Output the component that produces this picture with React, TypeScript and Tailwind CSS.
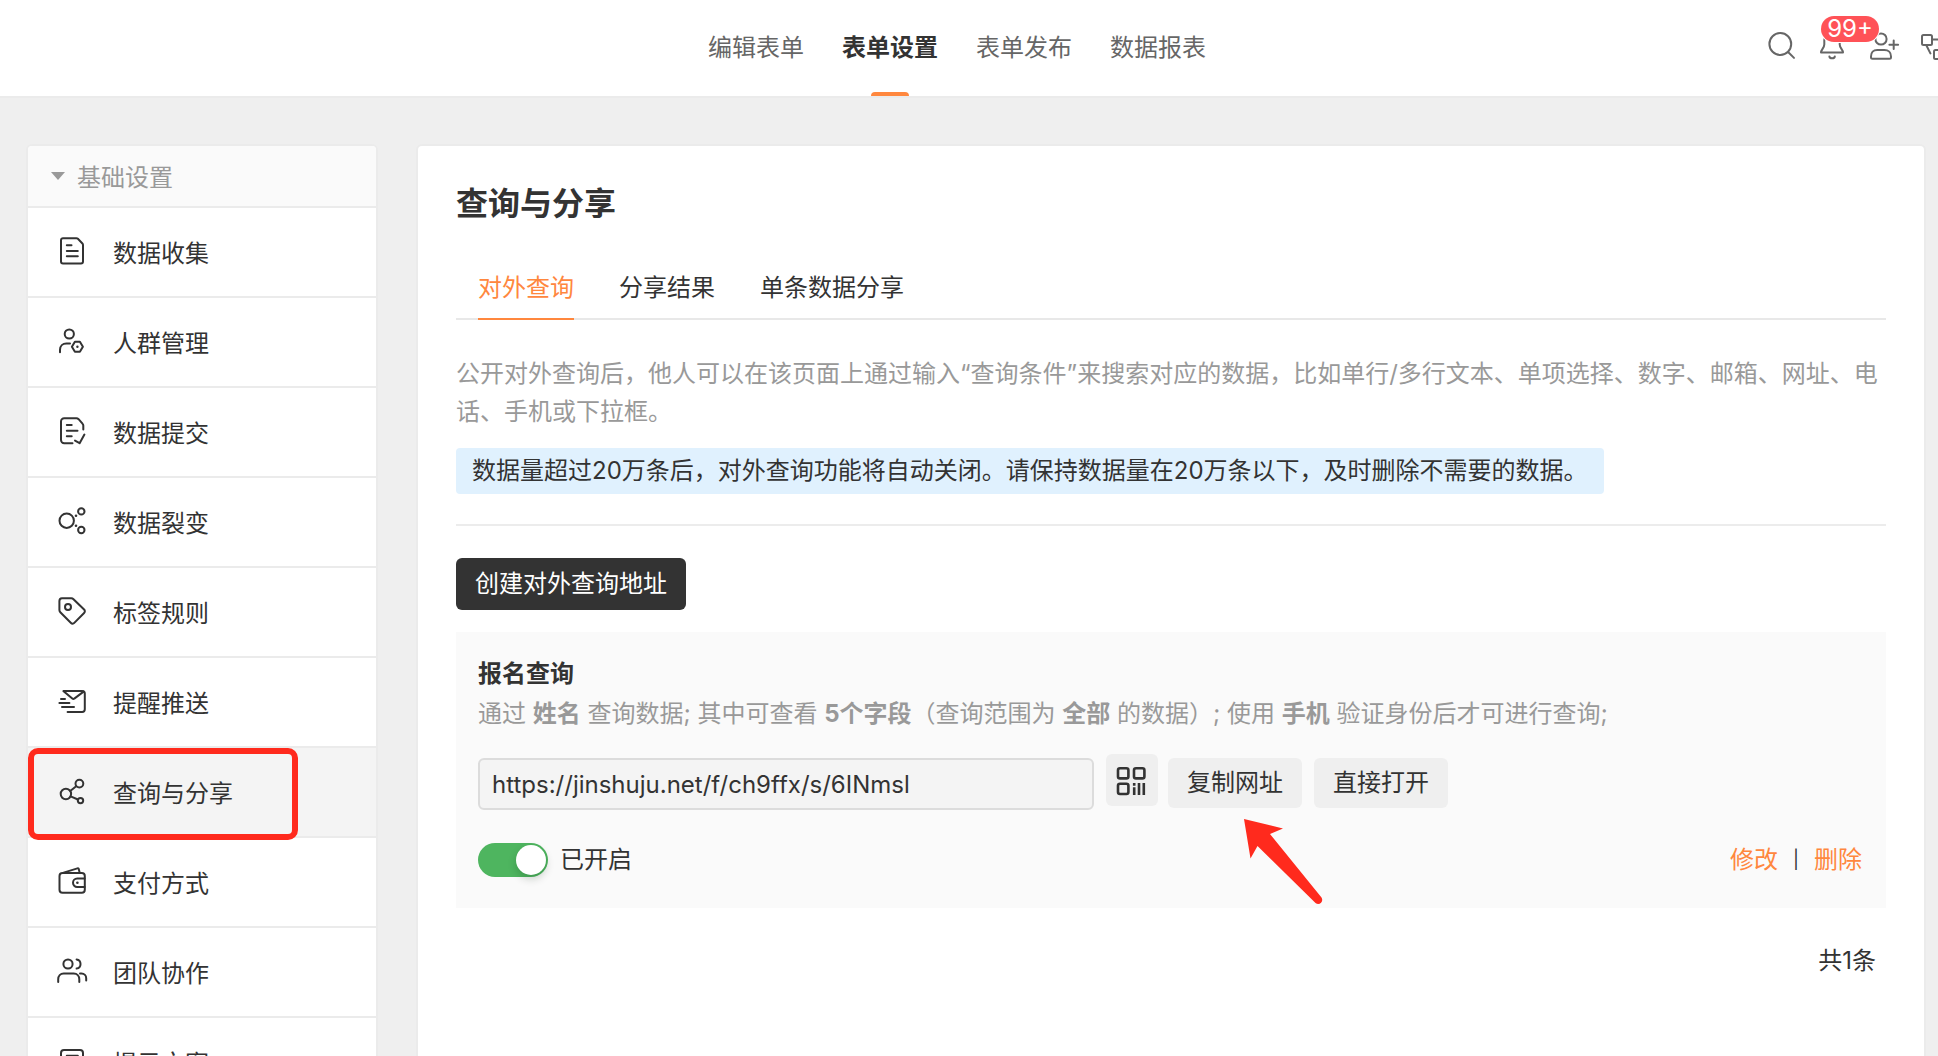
import { useState } from "react";
import type { ReactNode } from "react";

interface MenuItem {
  id: string;
  label: string;
  icon: ReactNode;
}

const NAV_ITEMS = ["编辑表单", "表单设置", "表单发布", "数据报表"];
const TABS = ["对外查询", "分享结果", "单条数据分享"];
const QUERY_URL = "https://jinshuju.net/f/ch9ffx/s/6INmsl";

const MENU_ITEMS: MenuItem[] = [
  {
    id: "collect",
    label: "数据收集",
    icon: (
      <>
        <path d="M5 2.2h13.4c.6 0 1.1.2 1.5.6l4.5 4.7c.4.4.6 1 .6 1.5v16.4a2 2 0 0 1-2 2H5a2 2 0 0 1-2-2V4.2a2 2 0 0 1 2-2z" />
        <path d="M8.8 9.3h4.7M8.8 15h11M8.8 20.3h11" />
      </>
    ),
  },
  {
    id: "people",
    label: "人群管理",
    icon: (
      <>
        <circle cx="11.3" cy="8" r="4.6" />
        <path d="M2 26.2v-2.4c0-3.8 2.8-6.4 6.4-6.4H12" />
        <path d="M16.9 15.8h5l3 5-3 5h-5l-3-5z" />
        <circle cx="19.4" cy="20.8" r="1.2" fill="currentColor" stroke="none" />
      </>
    ),
  },
  {
    id: "submit",
    label: "数据提交",
    icon: (
      <>
        <path d="M25.3 13.5V9.6c0-.7-.3-1.4-.8-1.9l-3.9-4.5c-.6-.6-1.3-1-2.1-1H6.2A3.2 3.2 0 0 0 3 5.4v18.7a3.2 3.2 0 0 0 3.2 3.2h8.3" />
        <path d="M8.8 9h4.9M8.8 14.7h10.7M8.8 20.2h4.9M17 24.6l4.6 2.6 4.8-8.6" />
      </>
    ),
  },
  {
    id: "fission",
    label: "数据裂变",
    icon: (
      <>
        <circle cx="8.7" cy="14.7" r="7.2" />
        <circle cx="23.3" cy="5.4" r="3.2" />
        <circle cx="23.3" cy="24" r="3.2" />
        <circle cx="18" cy="9.7" r="1.3" fill="currentColor" stroke="none" />
        <circle cx="18" cy="19.8" r="1.3" fill="currentColor" stroke="none" />
      </>
    ),
  },
  {
    id: "tags",
    label: "标签规则",
    icon: (
      <>
        <path d="M4 2.3h9.2c.9 0 1.7.3 2.3.9l10.6 10.3a2.4 2.4 0 0 1 0 3.5l-9.8 9.9c-.9 1-2.4 1-3.3.1L2.3 16.2A3 3 0 0 1 1.4 14V5a2.7 2.7 0 0 1 2.6-2.7z" />
        <circle cx="10" cy="11" r="3" />
      </>
    ),
  },
  {
    id: "notify",
    label: "提醒推送",
    icon: (
      <>
        <path d="M5.6 5h18.6a2.6 2.6 0 0 1 2.6 2.6v15.7a2.6 2.6 0 0 1-2.6 2.6H9.6" />
        <path d="M5.6 5.2l8.7 7.4c.6.5 1.4.5 2 0l9.3-7M3 13h4M1.4 17h10M4 21h12" />
      </>
    ),
  },
  {
    id: "query",
    label: "查询与分享",
    icon: (
      <>
        <circle cx="7.9" cy="18" r="5.2" />
        <circle cx="21.4" cy="7.6" r="3.9" />
        <circle cx="22.5" cy="24.6" r="2.7" />
        <path d="M12.2 15l6-4.8M12.6 20.3l7.3 3.2" />
      </>
    ),
  },
  {
    id: "payment",
    label: "支付方式",
    icon: (
      <>
        <rect x="1.5" y="7" width="25.3" height="19.7" rx="3" />
        <path d="M5.6 6.6l13.8-4.2c.7-.2 1.2.1 1.4.8l.9 3.6" />
        <path d="M26.6 12.6h-7.4a4.2 4.2 0 0 0 0 8.4h7.4" />
        <circle cx="19.4" cy="16.8" r="1.3" fill="currentColor" stroke="none" />
      </>
    ),
  },
  {
    id: "team",
    label: "团队协作",
    icon: (
      <>
        <circle cx="10" cy="8" r="4.6" />
        <path d="M18.6 3.5a4.6 4.6 0 0 1 0 9.1" />
        <path d="M.2 26v-2.7c0-3.3 2.2-5.7 5.500-5.7h10c3.300 0 5.600 2.400 5.600 5.700V26M22 17.600h1.500c2.800 0 4.700 2 4.700 4.600v2.200" />
      </>
    ),
  },
  {
    id: "texts",
    label: "提示文案",
    icon: (
      <>
        <rect x="3" y="4" width="22" height="23" rx="3" />
        <path d="M8.8 9.7h11M8.8 15.5h11" />
      </>
    ),
  },
];

function LineIcon({ className, viewBox, children }: Readonly<{ className: string; viewBox: string; children: ReactNode }>) {
  return (
    <svg
      className={`${className} shrink-0 overflow-visible`}
      viewBox={viewBox}
      fill="none"
      stroke="currentColor"
      strokeWidth="2"
      strokeLinecap="round"
      strokeLinejoin="round"
      aria-hidden="true"
    >
      {children}
    </svg>
  );
}

function TopBar() {
  const [current, setCurrent] = useState("表单设置");

  return (
    <header className="flex h-[98px] shrink-0 border-b-2 border-[#ebebeb] bg-white pr-6">
      <div className="flex-1" />
      <nav className="flex gap-[38px]">
        {NAV_ITEMS.map((item) => (
          <a
            key={item}
            href="#"
            onClick={() => setCurrent(item)}
            className={`relative flex items-center ${current === item ? "font-semibold text-[#333]" : "text-[#666]"}`}
          >
            {item}
            {current === item && (
              <span className="absolute bottom-0 left-1/2 h-1 w-[38px] -translate-x-1/2 rounded-t bg-[#ff873e]" />
            )}
          </a>
        ))}
      </nav>
      <div className="flex-1 text-[#666]">
        <div className="-mr-9 flex h-full items-center justify-end gap-[22px]">
          <button type="button" aria-label="搜索">
            <LineIcon className="h-8 w-7" viewBox="0 0 28 32">
              <circle cx="12.3" cy="12" r="10.9" />
              <path d="M20.3 20.2l5.7 5.7" />
            </LineIcon>
          </button>
          <button type="button" aria-label="通知" className="relative">
            <LineIcon className="h-8 w-7" viewBox="0 0 28 32">
              <path d="M14 1c-4.6 0-7.7 3-7.7 7v4.5c0 3.6-3.3 5-3.3 8.1h22c0-3.1-3.3-4.5-3.3-8.1V8c0-4-3.1-7-7.7-7z" />
              <path d="M11.4 24.5c.4 2.4 5 2.4 5.4 0" />
            </LineIcon>
            <span className="absolute -top-4 left-[3px] z-10 flex h-[26px] w-[58px] items-center justify-center rounded-full bg-[#ff5257] text-white shadow-[0_0_0_1px_#fff]">
              99+
            </span>
          </button>
          <button type="button" aria-label="添加成员">
            <LineIcon className="h-8 w-[30px]" viewBox="0 0 30 32">
              <circle cx="13" cy="7" r="5.6" />
              <path d="M9.2 18h7.2c4 0 6.6 2.6 6.6 6.4v.8a1.5 1.5 0 0 1-1.5 1.5h-17A1.5 1.5 0 0 1 3 25.2v-.8C3 20.6 5.4 18 9.2 18zM21.4 12.7h8.7M25.7 8.4v8.7" />
            </LineIcon>
          </button>
          <button type="button" aria-label="流程">
            <LineIcon className="h-8 w-[30px]" viewBox="0 0 30 32">
              <rect x="2" y="3" width="10" height="10" rx="1.5" />
              <rect x="14" y="18" width="10" height="9" rx="1.5" />
              <path d="M12.5 7.4h12M6.7 14l3.7 7.4" />
            </LineIcon>
          </button>
        </div>
      </div>
    </header>
  );
}

function Sidebar() {
  const [selected, setSelected] = useState("query");

  return (
    <aside className="w-[352px] shrink-0 rounded-t-md border-2 border-[#ebebeb] bg-white">
      <div className="flex h-[62px] items-center gap-3 rounded-t border-b-2 border-[#ebebeb] bg-[#fafafa] pl-[23px] text-[#999]">
        <svg className="h-2 w-3.5" viewBox="0 0 14 8" fill="currentColor" aria-hidden="true">
          <path d="M0 0h14L7 8z" />
        </svg>
        <span className="pt-1">基础设置</span>
      </div>
      <ul>
        {MENU_ITEMS.map((item) => (
          <li key={item.id} className="relative">
            <a
              href="#"
              onClick={() => setSelected(item.id)}
              className={`flex h-[90px] items-center gap-[27px] border-b-2 border-[#ebebeb] pl-[30px] ${selected === item.id ? "bg-[#f4f4f4]" : "bg-white"}`}
            >
              <LineIcon className="h-8 w-7" viewBox="0 0 28 32">
                {item.icon}
              </LineIcon>
              <span className="pt-1">{item.label}</span>
            </a>
            {selected === item.id && (
              <div className="pointer-events-none absolute top-0 -bottom-0.5 left-0 z-10 w-[270px] rounded-[10px] border-6 border-[#ff2a1d]" />
            )}
          </li>
        ))}
      </ul>
    </aside>
  );
}

function QueryCard() {
  const [enabled, setEnabled] = useState(true);

  return (
    <section className="relative mt-[22px] bg-[#fafafa] px-[22px] pt-[22px] pb-[29px]">
      <h2 className="leading-10 font-semibold">报名查询</h2>
      <p className="leading-10 text-[#999]">
        通过 <b>姓名</b> 查询数据; 其中可查看 <b>5个字段</b>（查询范围为 <b>全部</b> 的数据）; 使用 <b>手机</b> 验证身份后才可进行查询;
      </p>
      <div className="mt-5 flex items-start">
        <input
          type="text"
          readOnly
          aria-label="查询网址"
          value={QUERY_URL}
          className="mt-1 h-[52px] w-[616px] rounded-md border-2 border-[#dcdcdc] bg-[#f4f4f4] px-3 outline-none"
        />
        <button type="button" aria-label="二维码" className="ml-3 flex size-[52px] items-center justify-center rounded-md bg-[#efefef]">
          <svg className="size-[30px] overflow-visible" viewBox="0 0 30 30" fill="none" stroke="currentColor" strokeWidth="2.6" aria-hidden="true">
            <rect x="1" y="3.2" width="10.4" height="10.2" rx="2" />
            <rect x="17" y="3.2" width="10.4" height="10.2" rx="2" />
            <rect x="1" y="18.8" width="10.4" height="10.2" rx="2" />
            <path d="M17.2 18v2.7M17.2 22.3v7.7M22 18v12M26.8 18v12" />
          </svg>
        </button>
        <button type="button" className="mt-1 ml-2.5 h-[50px] rounded-md bg-[#efefef] px-[19px]">复制网址</button>
        <button type="button" className="mt-1 ml-3 h-[50px] rounded-md bg-[#efefef] px-[19px]">直接打开</button>
      </div>
      <div className="mt-[31px] flex items-center justify-between">
        <label className="flex items-center gap-3">
          <input
            type="checkbox"
            checked={enabled}
            onChange={(e) => setEnabled(e.target.checked)}
            className="relative h-[34px] w-[70px] appearance-none rounded-full bg-[#bfbfbf] before:absolute before:top-0.5 before:left-0.5 before:size-[30px] before:rounded-full before:bg-white before:shadow-[0_4px_8px_rgba(0,35,11,0.2)] checked:bg-[#4eb55f] checked:before:left-[38px]"
          />
          {enabled ? "已开启" : "已关闭"}
        </label>
        <div className="flex items-center gap-[15px] pr-0.5">
          <a href="#" className="text-[#ff873e]">修改</a>
          <span className="text-lg">|</span>
          <a href="#" className="text-[#ff873e]">删除</a>
        </div>
      </div>
      {/* pointer to the copy button */}
      <svg className="pointer-events-none absolute top-[187px] left-[788px] h-[86px] w-20" viewBox="0 0 80 86" aria-hidden="true">
        <path d="M0 0l39 9.5-13 5.5 51.5 63.5c2.5 4-2 8.5-6 5.5L13.5 27 6.5 39.5z" fill="#ff2a1d" />
      </svg>
    </section>
  );
}

export default function App() {
  const [tab, setTab] = useState("对外查询");

  return (
    <div
      lang="zh-CN"
      className="flex h-screen flex-col overflow-hidden bg-[#efefef] font-[Inter,'Noto_Sans_CJK_SC',sans-serif] text-2xl leading-[38px] text-[#333]"
    >
      <TopBar />
      <div className="flex min-h-0 flex-1 gap-[38px] pt-[46px] pr-3 pl-[26px]">
        <Sidebar />
        <main className="min-w-0 flex-1 rounded-t-md border-2 border-b-0 border-[#ebebeb] bg-white px-[38px] pt-[34px]">
          <h1 className="text-[32px] leading-[48px] font-semibold">查询与分享</h1>
          <div role="tablist" className="mt-[41px] flex gap-[45px] border-b-2 border-[#e8e8e8] px-[22px]">
            {TABS.map((item) => (
              <button
                key={item}
                type="button"
                role="tab"
                aria-selected={tab === item}
                onClick={() => setTab(item)}
                className={`-mb-0.5 border-b-2 pb-[11px] ${tab === item ? "border-[#ff873e] text-[#ff873e]" : "border-transparent"}`}
              >
                {item}
              </button>
            ))}
          </div>
          <p className="mt-[35px] text-[#999]">
            公开对外查询后，他人可以在该页面上通过输入“查询条件”来搜索对应的数据，比如单行/多行文本、单项选择、数字、邮箱、网址、电话、手机或下拉框。
          </p>
          <p className="mt-[17px] w-fit rounded bg-[#e0f1fe] px-4 leading-[46px]">
            数据量超过20万条后，对外查询功能将自动关闭。请保持数据量在20万条以下，及时删除不需要的数据。
          </p>
          <hr className="mt-[30px] border-t-2 border-[#ececec]" />
          <button type="button" className="mt-8 block h-[52px] rounded-md bg-[#333] px-[19px] text-white">
            创建对外查询地址
          </button>
          <QueryCard />
          <p className="mt-[34px] pr-2.5 text-right">共1条</p>
        </main>
      </div>
    </div>
  );
}
